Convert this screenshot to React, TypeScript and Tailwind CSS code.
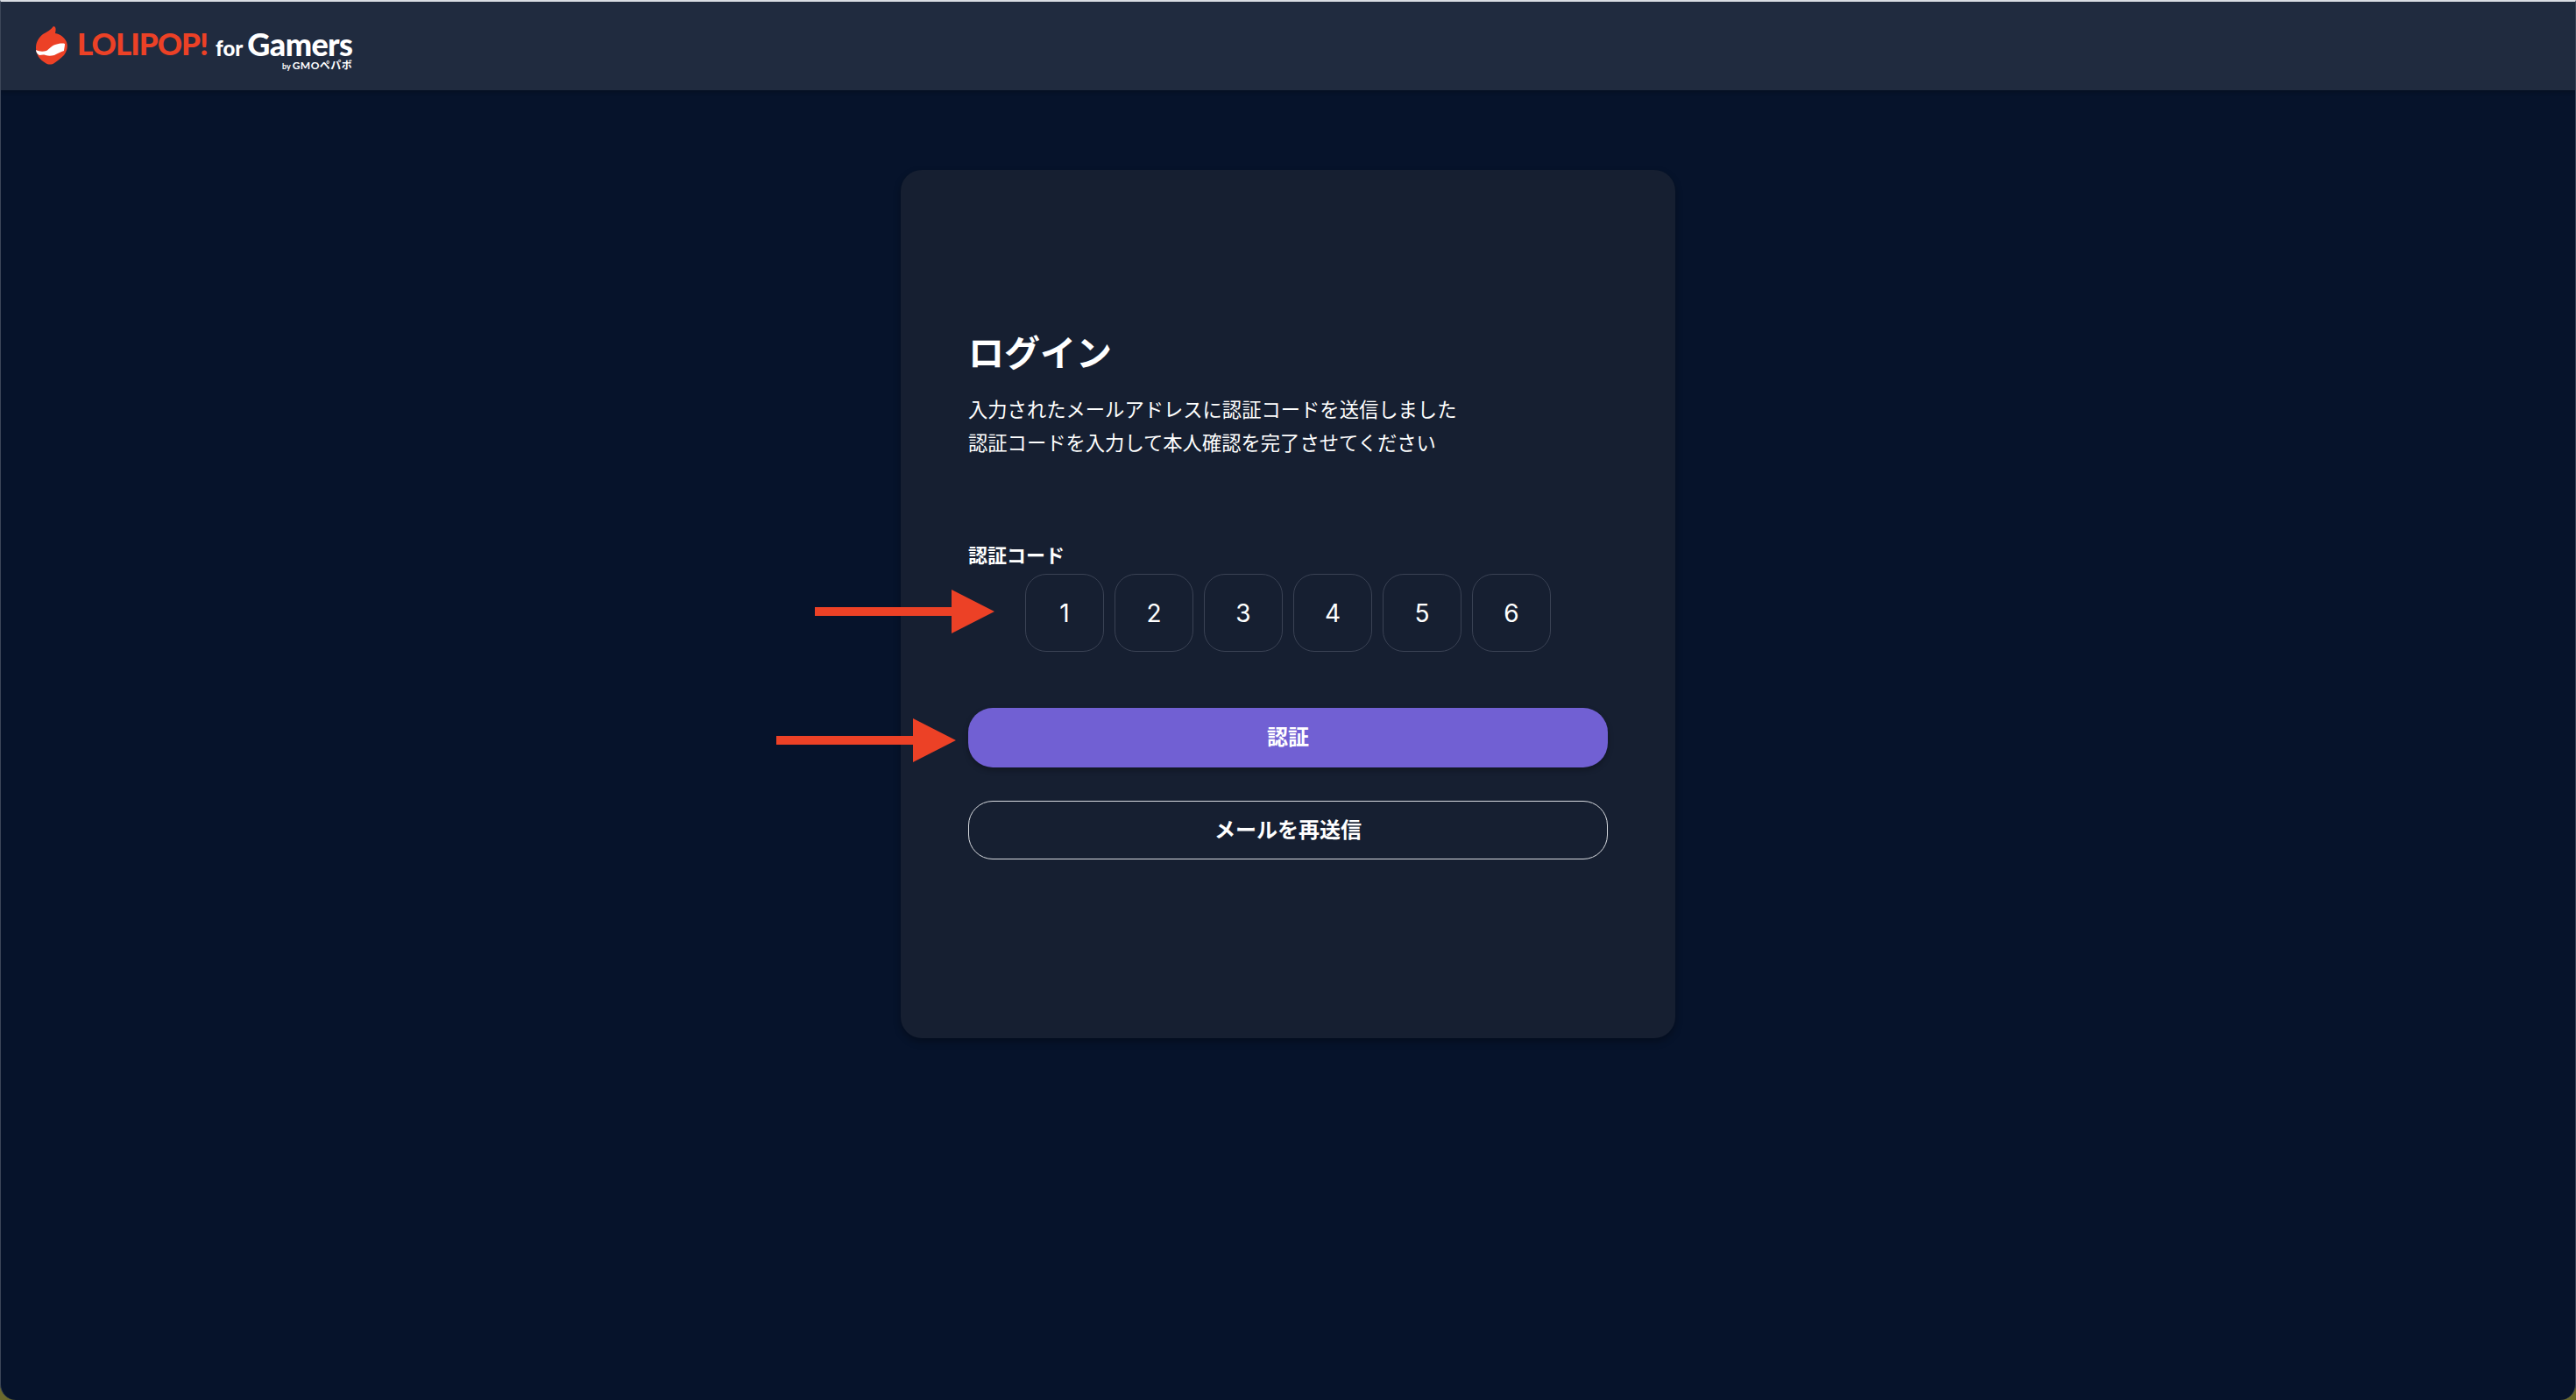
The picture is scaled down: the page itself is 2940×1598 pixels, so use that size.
import React from 'react';

const codeDigits = ['1', '2', '3', '4', '5', '6'];

function Arrow({ className }: { className: string }) {
  return (
    <svg className={className} width="205" height="50" viewBox="0 0 205 50">
      <path d="M0 20H156V0L205 25L156 50V30H0Z" fill="#ec4126" />
    </svg>
  );
}

function Logo() {
  return (
    <div className="flex items-start">
      <svg width="40" height="44" viewBox="0 0 40 44" className="mt-px">
        <path
          d="M21 0C24 0 24 4 23 8C29 9 34 13 36 18C38 24 36 29 33 33C29 37 25 40 22 42C19 44 15 44 12 42C9 40 6 38 4 35C2 31 1 29 1 25C1 18 4 13 9 9C14 6 18 4 21 0Z"
          fill="#ec4126"
        />
        <path
          d="M1 27C5 29 9 29 13 28C16 26 19 22 23 21C26 20 31 19 34 20C34 23 33 27 33 28C29 29 26 31 22 33C18 34 15 34 12 33C9 32 7 33 5 33C3 32 1 30 1 27Z"
          fill="#ffffff"
        />
      </svg>
      <span className="ml-[8px] mt-[-3px] text-[35px] leading-[46px] font-black tracking-[-1px] text-[#ec4126] font-['Lato',sans-serif]">
        LOLIPOP!
      </span>
      <div className="ml-[9px] flex flex-col items-end text-white font-['Lato',sans-serif]">
        <div className="flex items-baseline leading-none mt-[3px]">
          <span className="text-[24px] font-black mr-[5px]">for</span>
          <span className="text-[36px] font-black tracking-[-0.6px]">Gamers</span>
        </div>
        <span className="text-[9px] leading-[10px] font-bold mt-[2px] font-['Lato','Noto_Sans_CJK_JP',sans-serif]">
          by <span className="text-[12px] tracking-[0.5px]">GMOペパボ</span>
        </span>
      </div>
    </div>
  );
}

export default function App() {
  return (
    <div className="relative w-[2940px] h-[1598px] overflow-hidden bg-[#6b6a2c]">
      <div className="h-full flex flex-col overflow-hidden rounded-b-[18px] border-t-2 border-l border-r border-t-[#d9dde3] border-l-[#3c4658] border-r-[#3c4658] bg-[#06132b] font-['Inter','Noto_Sans_CJK_JP',sans-serif]">
        {/* ヘッダー */}
        <header className="h-[101px] shrink-0 flex items-start pt-[27px] pl-[39px] bg-[#202b3f] shadow-[0_2px_4px_rgba(0,0,0,0.25)]">
          <Logo />
        </header>

        <main className="flex justify-center pt-[91px]">
          <div className="w-[884px] h-[991px] flex flex-col px-[77px] pt-[185px] rounded-[24px] bg-[#161f31] shadow-[0_4px_8px_rgba(0,0,0,0.3)] text-white">
            <h1 className="text-[41px] leading-[48px] font-bold">ログイン</h1>
            <p className="mt-[22px] text-[22.3px] leading-[38px]">
              入力されたメールアドレスに認証コードを送信しました
              <br />
              認証コードを入力して本人確認を完了させてください
            </p>

            <label className="mt-[93px] text-[22px] leading-[32px] font-bold">認証コード</label>
            <div className="flex justify-center gap-3 mt-[5px]">
              {codeDigits.map((d) => (
                <div
                  key={d}
                  className="w-[90px] h-[89px] flex items-center justify-center rounded-[24px] border border-[#3a4254] text-[28px]"
                >
                  {d}
                </div>
              ))}
            </div>

            <button className="mt-[64px] h-[68px] rounded-[28px] bg-[#7160d3] text-[24px] font-bold shadow-[0_3px_6px_rgba(0,0,0,0.3)]">
              認証
            </button>
            <button className="mt-[38px] h-[67px] rounded-[28px] border border-[#d8dbe0] text-[24px] font-bold">
              メールを再送信
            </button>
          </div>
        </main>
      </div>

      {/* 赤い矢印の注釈 */}
      <Arrow className="absolute left-[930px] top-[673px]" />
      <Arrow className="absolute left-[886px] top-[820px]" />
    </div>
  );
}
